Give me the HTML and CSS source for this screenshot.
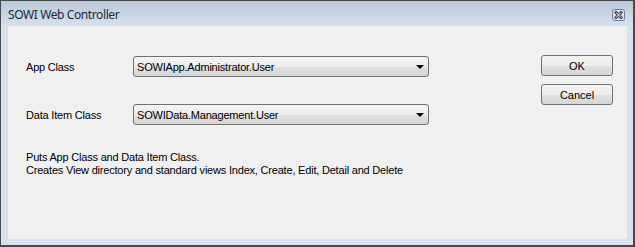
FILE: index.html
```html
<!DOCTYPE html>
<html lang="en">
<head>
  <meta charset="UTF-8" />
  <title>SOWI Web Controller</title>
  <link rel="stylesheet" href="styles.css">
</head>
<body>

  <div class="janela">
    <div class="barra-titulo">
      <span class="titulo">SOWI Web Controller</span>
      <span class="fechar">
        <svg width="13" height="12" viewBox="0 0 13 12">
          <rect x="0.5" y="0.5" width="12" height="11" rx="2" fill="#dde5ee" stroke="#6f7c91"/>
          <path d="M4 3.5 L9 8.5 M9 3.5 L4 8.5" stroke="#3d4656" stroke-width="3" stroke-linecap="square"/>
          <path d="M4 3.5 L9 8.5 M9 3.5 L4 8.5" stroke="#ffffff" stroke-width="1"/>
        </svg>
      </span>
    </div>

    <div class="cliente">
      <div class="formulario">
        <div class="campos">
          <label>App Class</label>
          <div class="combo">
            <span>SOWIApp.Administrator.User</span>
            <i class="seta"></i>
          </div>

          <label>Data Item Class</label>
          <div class="combo">
            <span>SOWIData.Management.User</span>
            <i class="seta"></i>
          </div>
        </div>

        <p class="descricao">
          Puts App Class and Data Item Class.<br>
          Creates View directory and standard views Index, Create, Edit, Detail and Delete
        </p>
      </div>

      <div class="botoes">
        <button>OK</button>
        <button>Cancel</button>
      </div>
    </div>
  </div>

</body>
</html>
```

FILE: styles.css
```css
body {
  margin: 0;
  background: #f0f0f0;
}

.janela {
  width: 635px;
  height: 247px;
  box-sizing: border-box;
  border-top: 1px solid #4a4a4a;
  border-left: 1px solid #4a4a4a;
  border-right: 2px solid #4a4a4a;
  border-bottom: 2px solid #4a4a4a;
  background: #d6e2f0;
  padding: 0 6px 6px 7px;
  display: flex;
  flex-direction: column;
}

.barra-titulo {
  height: 25px;
  flex-shrink: 0;
  margin: 0 -6px 0 -7px;
  padding: 0 8px 0 7px;
  background: linear-gradient(#bbc9d8, #d4e1ef);
  display: flex;
  align-items: center;
  justify-content: space-between;
}

.titulo {
  font-family: "Noto Sans", sans-serif;
  font-size: 12px;
  letter-spacing: -0.4px;
  color: #1e2a3a;
  margin-top: 1px;
}

.fechar {
  display: flex;
  margin-top: 2px;
}

.cliente {
  flex: 1;
  background: #f0f0f0;
  display: flex;
  justify-content: space-between;
  font-family: "Liberation Sans", Arial, sans-serif;
  font-size: 11px;
  letter-spacing: -0.2px;
  color: #000;
}

.formulario {
  padding: 30px 0 0 18px;
}

.campos {
  display: grid;
  grid-template-columns: 107px 296px;
  row-gap: 27px;
  align-items: center;
}

.combo {
  height: 21px;
  box-sizing: border-box;
  border: 1px solid #707070;
  border-radius: 3px;
  background: linear-gradient(#f4f4f4 0%, #ececec 50%, #e0e0e0 51%, #d6d6d6 100%);
  display: flex;
  align-items: center;
  justify-content: space-between;
  padding: 0 4px 0 3px;
}

.seta {
  width: 0;
  height: 0;
  border-left: 4px solid transparent;
  border-right: 4px solid transparent;
  border-top: 4px solid #000;
  margin-top: 1px;
}

.descricao {
  margin: 26px 0 0 0;
  line-height: 13px;
}

.botoes {
  padding: 29px 14px 0 0;
  display: flex;
  flex-direction: column;
  gap: 8px;
}

button {
  width: 72px;
  height: 21px;
  border: 1px solid #707070;
  border-radius: 3px;
  background: linear-gradient(#f4f4f4 0%, #ececec 50%, #e0e0e0 51%, #d6d6d6 100%);
  font-family: "Liberation Sans", Arial, sans-serif;
  font-size: 11px;
  color: #000;
  padding: 0;
}
```
